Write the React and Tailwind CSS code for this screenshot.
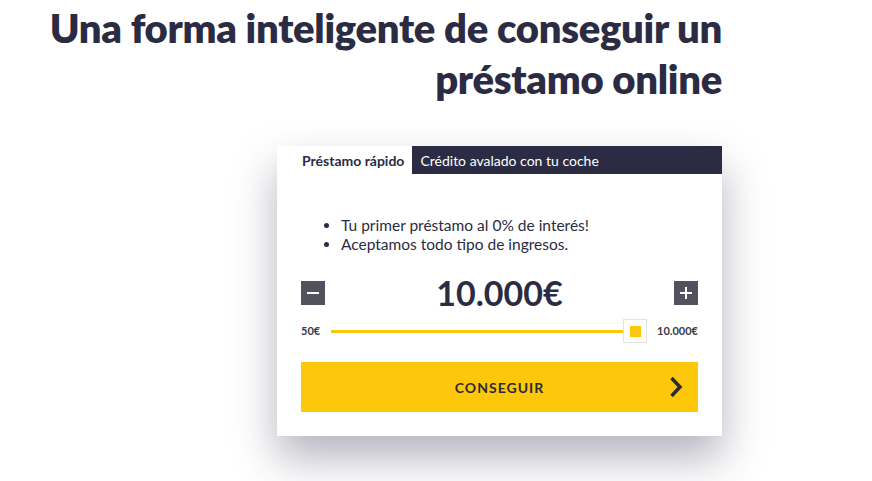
import React, { useState } from 'react';

const App = () => {
    const [amount, setAmount] = useState(10000);
    const min = 50;
    const max = 10000;
    const pct = ((amount - min) / (max - min)) * 100;

    const fmt = (n) => n.toLocaleString('de-DE') + '€';

    return (
        <div className="min-h-[481px] w-[872px] bg-white overflow-hidden" style={{ fontFamily: 'Lato, "Open Sans", sans-serif' }}>
            <div className="w-[722px] flex flex-col items-end">
                <h1 className="w-[680px] pt-[3px] text-right text-[40px] leading-[51px] font-extrabold text-[#2b2c43] tracking-[-0.3px]">
                    Una forma inteligente de conseguir un préstamo online
                </h1>

                <div className="mt-[41px] w-[445px] bg-white shadow-[0_22px_40px_rgba(40,42,70,0.35)]">
                    {/* Tabs */}
                    <div className="flex h-[28px] text-[14px]">
                        <button className="pl-[25px] pr-[8px] font-bold text-[#2b2c43]">Préstamo rápido</button>
                        <button className="flex-1 bg-[#2b2c43] text-white text-left pl-[8px]">Crédito avalado con tu coche</button>
                    </div>

                    <div className="px-[24px] pt-[42px] pb-[24px]">
                        <ul className="list-disc pl-[40px] text-[15.5px] leading-[19px] text-[#2b2c43]">
                            <li>Tu primer préstamo al 0% de interés!</li>
                            <li>Aceptamos todo tipo de ingresos.</li>
                        </ul>

                        <div className="mt-[19px] flex items-center justify-between">
                            <button
                                onClick={() => setAmount(Math.max(min, amount - 50))}
                                className="w-[24px] h-[24px] bg-[#52525f] flex items-center justify-center"
                            >
                                <span className="block w-[12px] h-[2px] bg-white" />
                            </button>
                            <div className="text-[34px] leading-[40px] font-bold text-[#2b2c43]">{fmt(amount)}</div>
                            <button
                                onClick={() => setAmount(Math.min(max, amount + 50))}
                                className="relative w-[24px] h-[24px] bg-[#52525f] flex items-center justify-center"
                            >
                                <span className="block w-[12px] h-[2px] bg-white" />
                                <span className="absolute w-[2px] h-[12px] bg-white" />
                            </button>
                        </div>

                        <div className="mt-[6px] flex items-center text-[11px] font-bold text-[#3a3a48]">
                            <span className="w-[30px]">50€</span>
                            <div className="relative flex-1 h-[24px] flex items-center mr-[10px]">
                                <div className="h-[3px] bg-[#fdc70c]" style={{ width: `${pct}%` }} />
                                <div className="absolute right-0 top-0 w-[24px] h-[24px] bg-white border border-[#e3e3e6] flex items-center justify-center">
                                    <span className="block w-[11px] h-[11px] bg-[#fdc70c]" />
                                </div>
                            </div>
                            <span>10.000€</span>
                        </div>

                        <button className="mt-[19px] w-full h-[50px] bg-[#fdc70c] relative flex items-center justify-center">
                            <span className="text-[14px] font-bold tracking-[1px] text-[#2b2c33]">CONSEGUIR</span>
                            <svg className="absolute right-[15px]" width="14" height="22" viewBox="0 0 14 22">
                                <path d="M2.5 2 L11 11 L2.5 20" stroke="#2b2c33" strokeWidth="3.5" fill="none" />
                            </svg>
                        </button>
                    </div>
                </div>
            </div>
        </div>
    );
};

export default App;
